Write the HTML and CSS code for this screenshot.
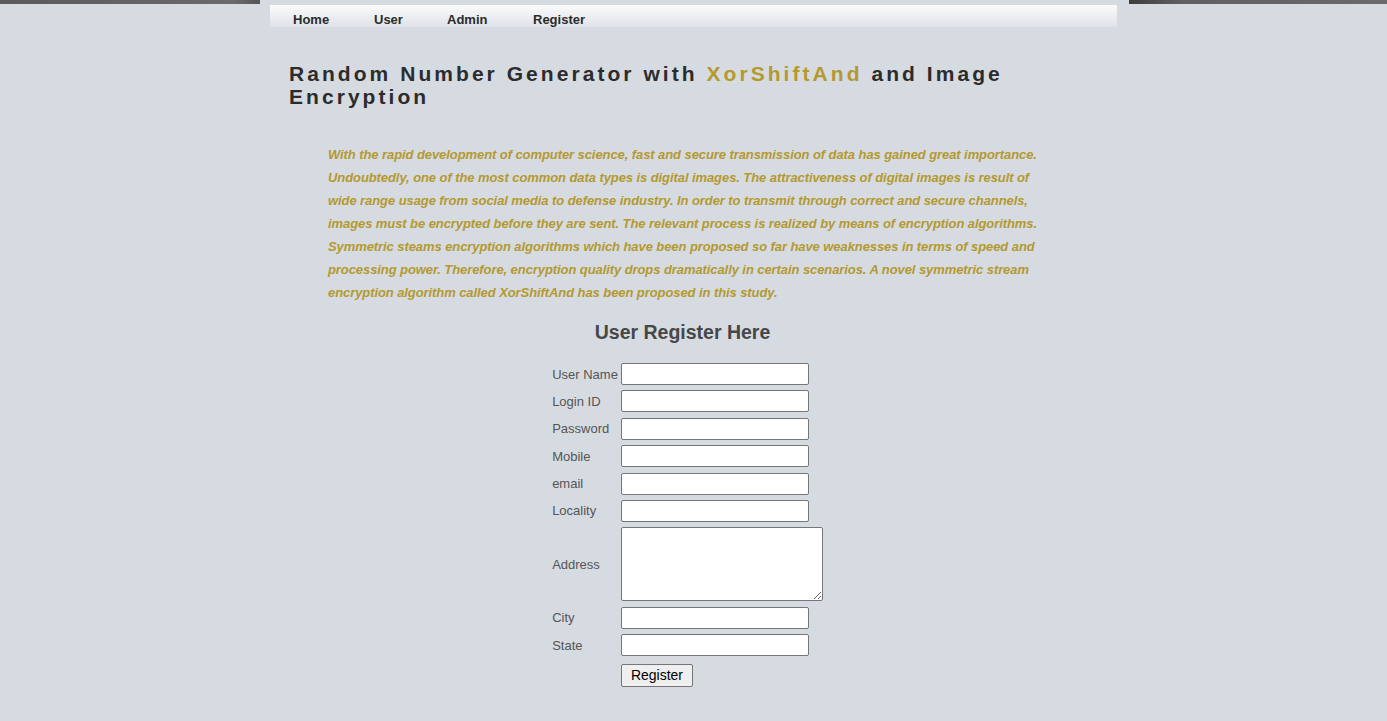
FILE: index.html
```html
<!DOCTYPE html>
<html>
<head>
<meta charset="utf-8">
<title>Random Number Generator</title>
<link rel="stylesheet" href="styles.css">
</head>
<body>
<div class="topbars">
  <div class="bar bar-left"></div>
  <div class="bar bar-right"></div>
</div>
<div class="page">
  <nav class="nav">
    <a class="nav-item" href="#">Home</a>
    <a class="nav-item" href="#">User</a>
    <a class="nav-item" href="#">Admin</a>
    <a class="nav-item" href="#">Register</a>
  </nav>
  <h1 class="title">Random Number Generator with <span class="accent">XorShiftAnd</span> and Image Encryption</h1>
  <p class="abstract">With the rapid development of computer science, fast and secure transmission of data has gained great importance. Undoubtedly, one of the most common data types is digital images. The attractiveness of digital images is result of wide range usage from social media to defense industry. In order to transmit through correct and secure channels, images must be encrypted before they are sent. The relevant process is realized by means of encryption algorithms. Symmetric steams encryption algorithms which have been proposed so far have weaknesses in terms of speed and processing power. Therefore, encryption quality drops dramatically in certain scenarios. A novel symmetric stream encryption algorithm called XorShiftAnd has been proposed in this study.</p>
  <div class="register">
    <h2 class="reg-title">User Register Here</h2>
    <form class="form">
      <label class="lbl">User Name</label><input class="field" type="text">
      <label class="lbl">Login ID</label><input class="field" type="text">
      <label class="lbl">Password</label><input class="field" type="password">
      <label class="lbl">Mobile</label><input class="field" type="text">
      <label class="lbl">email</label><input class="field" type="text">
      <label class="lbl">Locality</label><input class="field" type="text">
      <label class="lbl">Address</label><textarea class="area"></textarea>
      <label class="lbl">City</label><input class="field" type="text">
      <label class="lbl">State</label><input class="field" type="text">
      <span></span><div><button class="btn" type="button">Register</button></div>
    </form>
  </div>
</div>
</body>
</html>
```

FILE: styles.css
```css
html, body {
  margin: 0;
  padding: 0;
}
body {
  background: #d6dbe2;
  font-family: "Liberation Sans", Arial, sans-serif;
  min-height: 721px;
}
.topbars {
  display: flex;
  justify-content: space-between;
  height: 4px;
}
.bar {
  width: 260px;
  height: 4px;
}
.bar-left {
  background: linear-gradient(to right, #5a5a5a, #6a6a6a 90%, #555);
}
.bar-right {
  width: 258px;
  background: linear-gradient(to right, #3c3c3c, #606060 20%, #6a6a6a);
}
.page {
  width: 847px;
  margin: 1px auto 0;
}
.nav {
  height: 22px;
  box-sizing: border-box;
  background: linear-gradient(to bottom, #fbfbfc, #dfe2e7);
  display: flex;
  align-items: flex-start;
  padding: 7px 0 0 23px;
}
.nav-item {
  font-size: 13px;
  line-height: 15px;
  font-weight: bold;
  color: #2b2b2b;
  text-decoration: none;
}
.nav-item:nth-child(1) { width: 81px; }
.nav-item:nth-child(2) { width: 73px; }
.nav-item:nth-child(3) { width: 86px; }
.title {
  margin: 35px 80px 0 19px;
  font-size: 21px;
  line-height: 23px;
  letter-spacing: 3.05px;
  font-weight: bold;
  color: #2c2c2c;
}
.accent {
  color: #b4992f;
}
.abstract {
  margin: 35px 70px 0 58px;
  font-size: 13px;
  line-height: 23px;
  letter-spacing: -0.08px;
  font-style: italic;
  font-weight: bold;
  color: #b4992f;
}
.register {
  display: flex;
  flex-direction: column;
  align-items: center;
  margin-left: -22px;
}
.reg-title {
  margin: 16px 0 19px;
  font-size: 19.5px;
  line-height: 24px;
  font-weight: bold;
  color: #474747;
}
.form {
  display: grid;
  grid-template-columns: auto auto;
  column-gap: 3px;
  row-gap: 5.4px;
  align-items: center;
  margin-left: 10px;
}
.lbl {
  font-size: 13px;
  color: #555;
}
.field {
  width: 188px;
  height: 22px;
  box-sizing: border-box;
  border: 1px solid #767676;
  border-radius: 2px;
  background: #fff;
  margin: 0;
  padding: 1px 2px;
}
.area {
  width: 202px;
  height: 74px;
  box-sizing: border-box;
  border: 1px solid #767676;
  border-radius: 2px;
  background: #fff;
  margin: 0;
}
.btn {
  margin-top: 2px;
  font-family: "Liberation Sans", Arial, sans-serif;
  font-size: 14px;
  height: 23px;
  padding: 1px 9px;
  background: #efefef;
  border: 1px solid #767676;
  border-radius: 2px;
  color: #000;
}
```
